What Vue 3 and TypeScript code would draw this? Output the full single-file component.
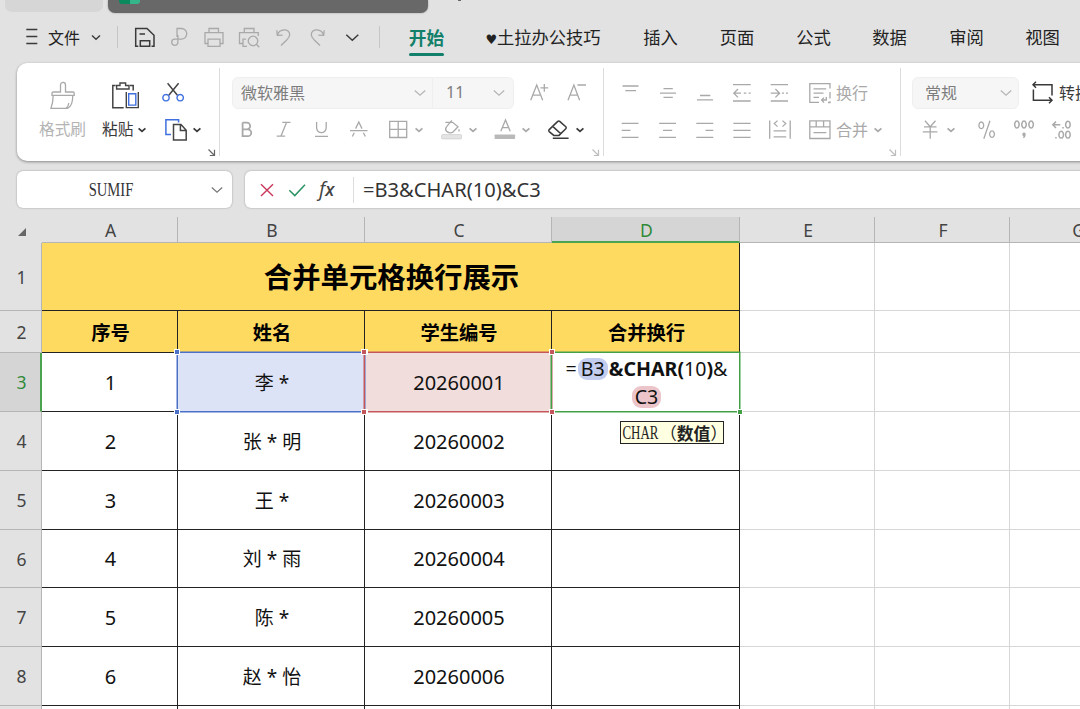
<script setup lang="ts">
import { h, type FunctionalComponent } from 'vue'

interface Stroke {
  d: string
  color?: string
  fill?: string
  width?: number
}

const line = (d: string, width?: number): Stroke[] => [{ d, width }]
const DARK = '#444'
const BLUE = '#3f6fe0'

const icons: Record<string, Stroke[]> = {
  menu: line('M6.3 4.5H17.3M6.3 11.5H17.3M6.3 18.5H17.3', 1.5),
  chevron: line('M8 10.5L12 14.3L16 10.5', 1.4),
  chevronWide: line('M6.3 9.8L12.3 15.3L18.3 9.8', 1.5),
  chevronBold: line('M8.6 10.3L12 13.3L15.4 10.3', 1.8),
  chevronSoft: line('M6.8 9.5L12 14.3L17.2 9.5', 1.2),
  save: line('M5.3 21.3H2.7V3.5H14L21 10.3V21.3H18.5M7.3 21.3V15.7H16.7V21.3ZM6.5 9H12', 1.5),
  exportPdf: line('M9 12V3.5H13.4a5.3 5.3 0 0 1 0 10.7H6.8a3.1 3.1 0 1 0 3.1 3.1V10', 1.3),
  print: line('M6 18.5H3V7.6H21V18.5H18M7 7.6V3.5H16.5V7.6M6 14.2H18V21.3H6Z', 1.3),
  preview: line('M5.5 18.5H2.5V7.6H21.3V11M7.3 7.6V3.5H17V7.6M10 21.3H6V14.2H9M16 11.2a4.7 4.7 0 1 0 .01 0M19.4 19.3L22.3 22.3', 1.3),
  undo: line('M5.8 5.2L6.3 10.4L11.6 10.1M6.3 10.4C8.3 3.5 18.6 3 18.7 9.8C18.7 12.2 17 13.7 15.5 15.2L10 20.5', 1.3),
  redo: line('M18.2 5.2L17.7 10.4L12.4 10.1M17.7 10.4C15.7 3.5 5.4 3 5.3 9.8C5.3 12.2 7 13.7 8.5 15.2L14 20.5', 1.3),
  brush: line('M1 14.3V12.2a1.2 1.2 0 0 1 1.2-1.2H9.5V3.9a2.5 2.5 0 0 1 5 0V11H22a1.2 1.2 0 0 1 1.2 1.2V14.3ZM2.2 14.3C2.2 19 1.4 23 0 27.3H16.5C20 26 21.8 21 21.8 14.3M15 27.3c1.7-1.2 2.6-3 2.8-5.3', 1.3),
  paste: [
    { d: 'M2.6 4.5H-.2V26.7H10.7M17 4.5H20.2V9.5', color: DARK, width: 1.5 },
    { d: 'M3.6 4.5V8H16V4.5H12.6V2H7V4.5Z', color: DARK, width: 1.4 },
    { d: 'M13.3 11V26.6H25.3V11', color: DARK, width: 1.4 },
    { d: 'M15.7 12.7H22.8V24.1H15.7Z', color: BLUE, width: 1.4 },
  ],
  cut: [
    { d: 'M17.6 2.2L7.8 14.2M6.6 2.2L16.4 14.2', color: DARK, width: 1.5 },
    { d: 'M5 13.5a3.2 3.2 0 1 0 .01 0M19.2 13.5a3.2 3.2 0 1 0 .01 0', color: BLUE, width: 1.4 },
  ],
  copy: [
    { d: 'M7 16.4H1.9V1.8H14.6V4.5', color: BLUE, width: 1.5 },
    { d: 'M9.5 6.6H17L22.2 12.2V21.9H9.5ZM16.4 6.6V12.6H22.2', color: DARK, width: 1.5 },
  ],
  launcher: line('M9.5 9.5L15 15M10.8 15.5H15.5V9.8', 1.2),
  grow: line('M3.7 19.3L9.7 4L15.7 19.3M5.8 14.2H13.6M13.4 6.8H21.2M17.3 2.9V10.7', 1.3),
  shrink: line('M4 19.3L9.9 4L15.6 19.3M6 14.2H13.6M13.4 4H22', 1.3),
  bold: line('M7.6 4.6H11.8a3.3 3.3 0 0 1 0 6.7H7.6M7.6 11.3H12.8a3.4 3.4 0 0 1 0 6.9H7.6V4.6', 1.8),
  italic: line('M11.3 4.3H19.5M5.7 18.2H14.2M15.6 4.3L9.9 18.2', 1.3),
  underline: line('M7.6 4V9.8a4.8 4.8 0 0 0 9.6 0V4M6 18.3H19', 1.3),
  strike: line('M3 12.6H20.5M5.3 18.5L7.3 14.8M8.6 10.6L11.8 4L15 10.6M16.4 14.8L18.4 18.5', 1.3),
  border: line('M3.7 3.3H20.7V19.5H3.7ZM12.2 3.3V19.5M3.7 11.4H20.7', 1.3),
  bucket: [
    { d: 'M5.3 4.3H12.6L18 8.8L13 14C11.3 15.3 8.3 15 6.6 13.3C5.2 11.7 5.4 10 6.7 8.6L11.8 2.4M19 11.2V13.6', width: 1.3 },
    { d: 'M2.5 16.6H20.7a.9.9 0 0 1 .9.9V20a.9.9 0 0 1-.9.9H2.5a.9.9 0 0 1-.9-.9V17.5a.9.9 0 0 1 .9-.9Z', fill: '#e4e4e4', color: '#cfcfcf', width: 0.8 },
  ],
  fontColor: [
    { d: 'M7.8 13.3L12.5 1.9L17.2 13.3M9.4 9.6H15.6', width: 1.3 },
    { d: 'M2.5 16.4H21.2a.9.9 0 0 1 .9.9V20.2a.9.9 0 0 1-.9.9H2.5a.9.9 0 0 1-.9-.9V17.3a.9.9 0 0 1 .9-.9Z', fill: '#b9b9b9', color: 'none' },
  ],
  eraser: line('M2.2 11.6L10.8 3.4a1.4 1.4 0 0 1 1.9 0L18.8 8.8a1.4 1.4 0 0 1 0 2L12 17.4H6.8L2.2 13.6a1.4 1.4 0 0 1 0-2ZM6 8.6L13.8 15.8M5.8 20.2H21.6', 1.5),
  alignTop: line('M4.5 5H20.5M7.3 9.6H18'),
  alignMiddle: line('M7.5 7.6H16.8M4 12.2H20M7.5 16.4H16.8'),
  alignBottom: line('M7 14.5H17.3M4 18.8H20'),
  outdent: line('M3 3.7H20.7M3 20H20.7M11 12.2H3.8M8 8L3.8 12.2L8 16.4M13.8 12.2H16.3M18.6 12.2H20.7'),
  indent: line('M3.7 3.7H21M3.7 20H21M3.7 12.2H12.4M8.4 8L12.6 12.2L8.4 16.4M15 12.2H17M19 12.2H21'),
  wrap: line('M11 21.3H1.8V2.6H22V7.5M22 11V17.5M22 20.3V21.5H20M5.5 7.8H18.2M5.5 12.2H15.5M5.5 16.4H11M18.3 16V19H14M16 16.6L13.6 19L16 21.6'),
  alignLeft: line('M3.7 5.3H20.5M3.7 12.3H12.5M3.7 19.3H20.5'),
  alignCenter: line('M3.2 5.3H20M7 12.3H16.2M3.2 19.3H20'),
  alignRight: line('M3.3 5.3H20.3M12.5 12.3H20.3M3.3 19.3H20.3'),
  justify: line('M3.3 5.3H20.6M3.3 12.3H20.6M3.3 19.3H20.6'),
  distribute: line('M2.7 2.5V20.8M23.2 2.5V20.8M10.5 2.6L7.3 5.6L10.5 8.6M15.5 2.6L18.7 5.6L15.5 8.6M6.6 12.9H19.2M6.6 18.8H19.2'),
  merge: line('M1.8 2.9H22V20.5H1.8ZM1.8 8.9H22M8.2 2.9V8.9M15.6 2.9V8.9M5.5 14.6H18.3'),
  convert: line('M6 .8L3 3.8L6 6.8M3 3.8H22V14.5M3.4 8.5V19.2H22M19 16.2L22 19.2L19 22.2', 1.5),
  yuan: line('M7 2.8L12.2 8.8L17.5 2.8M6 8.8H18.5M4.8 13.8H19.4M12.2 8.8V20.8'),
  percent: line('M6.3 4a2.4 3.3 0 1 0 .01 0M17 12.8a2.4 3.3 0 1 0 .01 0M15 2.8L8.8 20.8'),
  thousands: [
    { d: 'M4.9 2.9a2.2 3.5 0 1 0 .01 0M12 2.9a2.2 3.5 0 1 0 .01 0M19.1 2.9a2.2 3.5 0 1 0 .01 0', width: 1.5 },
    { d: 'M12 15.3a1 1 0 1 0 .01 0M13 16.3Q13 18.8 11.3 19.7', width: 1.5 },
  ],
  decimals: line('M10.3 6.8H2.8M6 3.6L2.8 6.8L6 10M12.3 9.7H13.8M17.9 3.2a2.3 3.4 0 1 0 .01 0M5.2 19.7H6.7M11.2 13.3a2.3 3.4 0 1 0 .01 0M17.9 13.3a2.3 3.4 0 1 0 .01 0', 1.5),
  cancel: [{ d: 'M6 6.2L18 18M18 6.2L6 18', color: '#c9375b', width: 1.4 }],
  confirm: [{ d: 'M4.3 12.2L9.8 17.6L20 6.8', color: '#2b9464', width: 1.5 }],
}

const Icon: FunctionalComponent<{ name: string }> = (props) =>
  h(
    'svg',
    { class: 'icon', width: 24, height: 24, viewBox: '0 0 24 24', overflow: 'visible', fill: 'none' },
    icons[props.name].map((s) =>
      h('path', {
        d: s.d,
        stroke: s.color ?? 'currentColor',
        fill: s.fill ?? 'none',
        'stroke-width': s.width ?? 1.3,
      }),
    ),
  )
Icon.props = ['name']

const tabs = ['开始', '土拉办公技巧', '插入', '页面', '公式', '数据', '审阅', '视图']
const columns = ['A', 'B', 'C', 'D', 'E', 'F', 'G']
const headings = ['序号', '姓名', '学生编号', '合并换行']
const students = [
  { name: '李 *', id: '20260001' },
  { name: '张 * 明', id: '20260002' },
  { name: '王 *', id: '20260003' },
  { name: '刘 * 雨', id: '20260004' },
  { name: '陈 *', id: '20260005' },
  { name: '赵 * 怡', id: '20260006' },
]
</script>

<template>
  <div class="app">
    <div class="strip">
      <div class="doc-tab idle"></div>
      <div class="doc-tab current"><i class="logo"></i></div>
      <i class="speck"></i>
    </div>

    <nav class="menubar">
      <Icon name="menu" class="dark" />
      <span class="file">文件</span>
      <Icon name="chevron" class="dark" />
      <i class="rule"></i>
      <Icon name="save" class="dark" />
      <Icon name="exportPdf" />
      <Icon name="print" />
      <Icon name="preview" />
      <Icon name="undo" />
      <Icon name="redo" />
      <Icon name="chevronWide" class="dark" />
      <i class="rule"></i>
      <span v-for="(t, i) in tabs" :key="t" class="tab" :class="{ active: i === 0 }"
        ><span v-if="i === 1" class="heart">♥</span>{{ t }}</span
      >
    </nav>

    <section class="ribbon">
      <div class="group clip">
        <div class="row top"><Icon name="brush" /><Icon name="paste" /><Icon name="cut" /></div>
        <div class="row bottom">
          <span class="faint">格式刷</span><span class="dark">粘贴</span>
          <Icon name="chevronBold" class="dark" /><Icon name="copy" /><Icon name="chevronBold" class="dark" />
        </div>
        <Icon name="launcher" class="launcher strong" />
      </div>
      <div class="group font">
        <div class="row top">
          <div class="combo face"><span>微软雅黑</span><Icon name="chevronSoft" /></div>
          <div class="combo size"><span>11</span><Icon name="chevronSoft" /></div>
          <Icon name="grow" /><Icon name="shrink" />
        </div>
        <div class="row bottom">
          <Icon name="bold" /><Icon name="italic" /><Icon name="underline" /><Icon name="strike" />
          <Icon name="border" /><Icon name="chevronBold" /><Icon name="bucket" /><Icon name="chevronBold" />
          <Icon name="fontColor" /><Icon name="chevronBold" /><Icon name="eraser" class="dark" />
          <Icon name="chevronBold" class="dark" />
        </div>
        <Icon name="launcher" class="launcher" />
      </div>
      <div class="group align">
        <div class="row">
          <Icon name="alignTop" /><Icon name="alignMiddle" /><Icon name="alignBottom" />
          <Icon name="outdent" /><Icon name="indent" /><Icon name="wrap" /><span>换行</span>
        </div>
        <div class="row">
          <Icon name="alignLeft" /><Icon name="alignCenter" /><Icon name="alignRight" />
          <Icon name="justify" /><Icon name="distribute" /><Icon name="merge" /><span>合并</span>
          <Icon name="chevronBold" />
        </div>
        <Icon name="launcher" class="launcher" />
      </div>
      <div class="group number">
        <div class="row top">
          <div class="combo format"><span>常规</span><Icon name="chevronSoft" /></div>
          <Icon name="convert" class="dark" /><span class="dark">转换</span>
        </div>
        <div class="row bottom">
          <Icon name="yuan" /><Icon name="chevronBold" /><Icon name="percent" />
          <Icon name="thousands" /><Icon name="decimals" />
        </div>
      </div>
    </section>

    <div class="formula-bar">
      <div class="name-box"><span class="cell-ref">SUMIF</span><Icon name="chevronSoft" /></div>
      <div class="formula">
        <Icon name="cancel" /><Icon name="confirm" /><span class="fx">f<b>x</b></span>
        <span class="expression">=B3&amp;CHAR(10)&amp;C3</span>
      </div>
    </div>

    <main class="sheet">
      <div class="head corner"><svg width="9" height="8"><path d="M8 0V8H0Z" fill="#666" /></svg></div>
      <div v-for="c in columns" :key="c" class="head col" :class="{ selected: c === 'D' }">{{ c }}</div>

      <div class="head num">1</div>
      <div class="cell title">合并单元格换行展示</div>
      <div v-for="n in 3" :key="'t' + n" class="cell blank"></div>

      <div class="head num">2</div>
      <div v-for="t in headings" :key="t" class="cell heading">{{ t }}</div>
      <div v-for="n in 3" :key="'h' + n" class="cell blank"></div>

      <template v-for="(s, i) in students" :key="s.id">
        <div class="head num" :class="{ selected: i === 0 }">{{ i + 3 }}</div>
        <div class="cell">{{ i + 1 }}</div>
        <div class="cell name" :class="{ blue: i === 0 }">
          {{ s.name }}
          <template v-if="i === 0"><i class="frame"></i><i v-for="k in 4" :key="k" class="handle" :class="'h' + k"></i></template>
        </div>
        <div class="cell" :class="{ red: i === 0 }">
          {{ s.id }}
          <template v-if="i === 0"><i class="frame"></i><i v-for="k in 4" :key="k" class="handle" :class="'h' + k"></i></template>
        </div>
        <div class="cell" :class="{ editing: i === 0 }">
          <template v-if="i === 0">
            <div class="edit-line">=<span class="pill b">B3</span><b>&amp;CHAR(</b>10<b>)</b>&amp;</div>
            <div class="edit-line"><span class="pill c">C3</span></div>
            <i class="frame"></i><i class="handle h4"></i>
            <div class="hint"><span class="fn">CHAR</span><span class="arg">（<b>数值</b>）</span></div>
          </template>
        </div>
        <div v-for="n in 3" :key="s.id + n" class="cell blank"></div>
      </template>

      <div class="head num"></div>
      <div v-for="n in 7" :key="'e' + n" class="cell" :class="{ blank: n > 4 }"></div>
    </main>
  </div>
</template>

<style>
body {
  margin: 0;
  overflow: hidden;
}
</style>

<style scoped>
.app {
  width: 1080px;
  height: 709px;
  overflow: hidden;
  background: #e2e2e2;
  font-family: 'Noto Sans', 'Noto Sans CJK SC', sans-serif;
  color: #222;
}
.app * {
  box-sizing: border-box;
}
.icon {
  display: block;
  flex: none;
}
.dark {
  color: #3a3a3a;
}
.faint {
  color: #b4b4b4;
}

/* document tabs */
.strip {
  display: flex;
  height: 13px;
  padding-left: 5px;
}
.doc-tab {
  border-radius: 0 0 7px 7px;
}
.idle {
  width: 98px;
  height: 12px;
  background: #d6d6d6;
}
.current {
  width: 320px;
  height: 13px;
  margin-left: 5px;
  padding-left: 11px;
  background: #686868;
  box-shadow: 0 0 2px #999;
}
.logo {
  display: block;
  width: 21px;
  height: 4px;
  border-radius: 0 0 3px 3px;
  background: linear-gradient(90deg, #0b8a5e 50%, #35b58a 50%);
}
.speck {
  width: 3px;
  height: 1px;
  margin-left: 30px;
  background: #666;
}

/* menu bar */
.menubar {
  display: grid;
  grid-template-columns: 24px 40px 24px 18px 38px 32px 36px 34px 34px 36px 32px 22px 73px 160px 75px 78px 75px 77px 77px 75px;
  align-items: center;
  justify-items: center;
  height: 48px;
  padding-left: 20px;
  color: #a9a9a9;
}
.file,
.tab {
  font-family: 'Noto Sans CJK SC', sans-serif;
  line-height: 24px;
  white-space: nowrap;
  color: #222;
}
.file {
  font-size: 16px;
}
.tab {
  position: relative;
  font-size: 17.3px;
}
.heart {
  display: inline-block;
  width: 11.5px;
  font: 13px/20px 'DejaVu Sans', sans-serif;
}
.tab.active {
  font-weight: 700;
  font-size: 17.7px;
  color: #12806a;
}
.tab.active::after {
  content: '';
  position: absolute;
  left: 0;
  right: 0;
  bottom: -7px;
  height: 3px;
  border-radius: 2px;
  background: #12806a;
}
.rule {
  width: 1px;
  height: 22px;
  background: #c6c6c6;
}

/* ribbon */
.ribbon {
  display: flex;
  height: 98px;
  margin: 2px -20px 0 17px;
  border-radius: 10px;
  background: #fff;
  box-shadow: 0 1px 3px rgba(0, 0, 0, 0.4);
  color: #a9a9a9;
}
.group {
  display: grid;
  grid-template-rows: 36px 37px 8px;
  flex: none;
  margin: 5px 0;
  padding-top: 7px;
  border-right: 1px solid #dcdcdc;
}
.group:last-child {
  border-right: 0;
}
.row {
  display: grid;
  align-items: center;
  font: 16px/24px 'Noto Sans CJK SC', sans-serif;
  white-space: nowrap;
}
.row > span,
.combo > span {
  padding-bottom: 2px;
}
.clip {
  width: 203px;
}
.clip .row {
  font-size: 15.7px;
}
.clip .top {
  grid-template-columns: 62px 48px 24px;
  padding-left: 34px;
}
.clip .bottom {
  grid-template-columns: 63px 28px 34px 21px 24px;
  padding-left: 22px;
}
.font {
  width: 384px;
}
.font .top {
  grid-template-columns: 201px 81px 37px 24px;
  padding-left: 12px;
}
.font .top .icon:nth-child(n + 3) {
  margin-left: 13px;
}
.font .bottom {
  grid-template-columns: 36px 38px 38px 39px 21px 33px 21px 32px 21px 33px 21px 24px;
  padding-left: 15px;
}
.align {
  width: 297px;
}
.align .row {
  grid-template-columns: 38px 37px 37px 37px 41px 28px 30px 24px;
  padding-left: 14px;
}
.number .top {
  grid-template-columns: 118px 29px 40px;
  padding-left: 11px;
}
.number .bottom {
  grid-template-columns: 21px 36px 37px 38px 24px;
  padding-left: 17px;
}
.combo {
  display: flex;
  align-items: center;
  justify-content: space-between;
  height: 32px;
  margin-bottom: 1px;
  border: 1px solid #efefef;
  background: #f6f6f6;
  color: #7d7d7d;
}
.combo .icon {
  color: #b5b5b5;
}
.face {
  padding-left: 8px;
  border-radius: 6px 0 0 6px;
}
.size {
  padding: 0 2px 0 13px;
  border-left: 0;
  border-radius: 0 6px 6px 0;
  font-family: 'Noto Sans', sans-serif;
}
.format {
  width: 107px;
  padding-left: 12px;
  border-radius: 6px;
}
.launcher {
  justify-self: end;
  align-self: center;
  margin: -8px -4px;
  color: #bdbdbd;
}
.launcher.strong {
  color: #666;
}

/* formula bar */
.formula-bar {
  display: flex;
  gap: 13px;
  height: 37px;
  margin: 10px -20px 0 17px;
}
.name-box,
.formula {
  display: flex;
  align-items: center;
  border-radius: 6px;
  background: #fff;
  box-shadow: 0 0 2px rgba(0, 0, 0, 0.35);
}
.name-box {
  width: 215px;
  padding-right: 3px;
  color: #777;
}
.cell-ref {
  flex: 1;
  font: 18.5px/24px 'Liberation Serif', serif;
  text-align: center;
  color: #333;
  transform: scaleX(0.79);
}
.formula {
  flex: 1;
  gap: 6px;
  padding-left: 10px;
}
.fx {
  width: 39px;
  height: 26px;
  padding-left: 4px;
  border-right: 1px solid #ddd;
  font: italic 20px/24px 'Open Sans', sans-serif;
  color: #444;
}
.fx b {
  font-weight: 600;
  font-size: 18px;
}
.expression {
  margin-left: 3px;
  font-size: 20.1px;
  line-height: 24px;
  color: #333;
}

/* sheet */
.sheet {
  display: grid;
  grid-template-columns: 42px 136px 187px 187px 188px 135px 135px 136px;
  grid-template-rows: 26px 68px 42px 59px 59px 59px 58px 59px 59px 59px;
  margin-top: 9px;
}
.head {
  display: flex;
  align-items: center;
  justify-content: center;
  font-size: 17.5px;
  color: #444;
}
.col {
  padding: 1px 0 0 2px;
  border-right: 1px solid #b5b5b5;
  border-bottom: 1px solid #b5b5b5;
}
.corner {
  padding: 3px 0 0 2px;
}
.num {
  padding-left: 2px;
  border-right: 1px solid #b5b5b5;
  border-bottom: 1px solid #b5b5b5;
}
.head.selected {
  background: #d5d5d5;
  color: #2f8a38;
}
.col.selected {
  padding-top: 2px;
  border-bottom: 2px solid #4ca350;
}
.num.selected {
  padding-left: 3px;
  border-right: 2px solid #4ca350;
}
.cell {
  position: relative;
  display: flex;
  align-items: center;
  justify-content: center;
  padding: 1px 0 0 2px;
  border-right: 1px solid #222;
  border-bottom: 1px solid #222;
  background: #fff;
  font-size: 20px;
  line-height: 28px;
  color: #111;
}
.blank {
  border-color: #d6d6d6;
}
.title,
.heading {
  background: #ffda60;
  font-family: 'Noto Sans CJK SC', sans-serif;
  font-weight: 700;
  color: #000;
}
.title {
  grid-column: 2 / 6;
  padding: 0 0 2px 2px;
  font-size: 28.4px;
}
.heading {
  padding-top: 0;
  font-size: 19.3px;
}
.name {
  font-size: 19px;
}
.blue {
  background: #dde3f6;
  --tone: #4a70c8;
}
.red {
  background: #f2dddd;
  --tone: #c4575c;
}
.frame {
  position: absolute;
  inset: -1px -1px -1px -1px;
  z-index: 1;
  border: 1.5px solid var(--tone);
  box-shadow: 0 0 0 0.5px var(--tone);
}
.handle {
  position: absolute;
  z-index: 3;
  width: 6px;
  height: 6px;
  border: 1px solid #fff;
  background: var(--tone);
}
.h1 {
  left: -4px;
  top: -4px;
}
.h2 {
  right: -4px;
  top: -4px;
}
.h3 {
  left: -4px;
  bottom: -4px;
}
.h4 {
  right: -4px;
  bottom: -4px;
}
.editing {
  --tone: #43a047;
  flex-direction: column;
  justify-content: flex-start;
  padding-top: 2px;
}
.editing .frame {
  z-index: 2;
}
.edit-line {
  font-size: 19.6px;
  line-height: 28px;
  white-space: nowrap;
}
.pill {
  display: inline-block;
  margin: 0 1px;
  padding: 0 3px;
  border-radius: 9px;
  line-height: 22px;
}
.pill.b {
  background: #c3cdf0;
}
.pill.c {
  background: #ecc5ca;
}
.hint {
  position: absolute;
  left: 68px;
  top: 68px;
  z-index: 4;
  display: flex;
  align-items: center;
  width: 104px;
  height: 23px;
  border: 1px solid #222;
  background: #ffffe1;
  color: #222;
}
.fn {
  width: 38px;
  padding-left: 2px;
  font: 18.5px/20px 'Liberation Serif', serif;
  transform: scaleX(0.7);
  transform-origin: left;
}
.arg {
  margin-left: 1px;
  font: 16.8px/20px 'Noto Sans CJK SC', sans-serif;
  white-space: nowrap;
}
</style>
